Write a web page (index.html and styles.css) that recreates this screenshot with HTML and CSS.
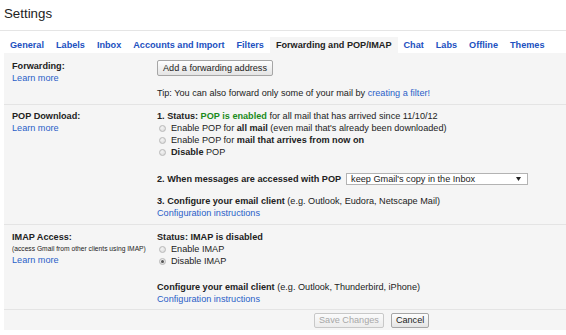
FILE: index.html
```html
<!DOCTYPE html>
<html>
<head>
<meta charset="utf-8">
<title>Settings</title>
<link rel="stylesheet" href="styles.css">
</head>
<body>
<div class="header"><h1 class="title">Settings</h1></div>
<nav class="tabs">
  <a class="tab">General</a>
  <a class="tab">Labels</a>
  <a class="tab">Inbox</a>
  <a class="tab">Accounts and Import</a>
  <a class="tab">Filters</a>
  <span class="tab active">Forwarding and POP/IMAP</span>
  <a class="tab">Chat</a>
  <a class="tab">Labs</a>
  <a class="tab">Offline</a>
  <a class="tab">Themes</a>
</nav>
<div class="panel">
  <section class="row row-fwd">
    <div class="label">
      <div class="label-title">Forwarding:</div>
      <a class="link">Learn more</a>
    </div>
    <div class="body">
      <div><button class="btn">Add a forwarding address</button></div>
      <div class="line tip">Tip: You can also forward only some of your mail by <a class="link">creating a filter!</a></div>
    </div>
  </section>
  <section class="row row-pop">
    <div class="label">
      <div class="label-title">POP Download:</div>
      <a class="link">Learn more</a>
    </div>
    <div class="body">
      <div class="line"><b>1. Status: </b><b class="green">POP is enabled</b> for all mail that has arrived since 11/10/12</div>
      <div class="line option"><span class="radio"></span><span>Enable POP for <b>all mail</b> (even mail that's already been downloaded)</span></div>
      <div class="line option"><span class="radio"></span><span>Enable POP for <b>mail that arrives from now on</b></span></div>
      <div class="line option"><span class="radio"></span><span><b>Disable</b> POP</span></div>
      <div class="when"><b>2. When messages are accessed with POP</b>
        <div class="select"><span>keep Gmail's copy in the Inbox</span><svg class="arrow" width="5" height="4" viewBox="0 0 5 4"><path d="M0 0H5L2.5 4Z" fill="#222"/></svg></div>
      </div>
      <div class="line block-gap"><b>3. Configure your email client</b> (e.g. Outlook, Eudora, Netscape Mail)</div>
      <div class="line"><a class="link">Configuration instructions</a></div>
    </div>
  </section>
  <section class="row row-imap">
    <div class="label">
      <div class="label-title">IMAP Access:</div>
      <div class="small">(access Gmail from other clients using IMAP)</div>
      <a class="link">Learn more</a>
    </div>
    <div class="body">
      <div class="line"><b>Status: IMAP is disabled</b></div>
      <div class="line option"><span class="radio"></span><span>Enable IMAP</span></div>
      <div class="line option"><span class="radio checked"></span><span>Disable IMAP</span></div>
      <div class="line block-gap2"><b>Configure your email client</b> (e.g. Outlook, Thunderbird, iPhone)</div>
      <div class="line"><a class="link">Configuration instructions</a></div>
    </div>
  </section>
  <div class="actions">
    <button class="btn small-btn" disabled>Save Changes</button>
    <button class="btn small-btn">Cancel</button>
  </div>
</div>
</body>
</html>
```
FILE: styles.css
```css
html, body {
  margin: 0;
  padding: 0;
  background: #fff;
}
body {
  font-family: "Liberation Sans", Arial, sans-serif;
  font-size: 9.15px;
  color: #222;
}
.header {
  height: 30px;
  border-bottom: 1px solid #e5e5e5;
}
.title {
  margin: 0;
  padding: 6px 0 0 4px;
  font-size: 13.3px;
  line-height: 16px;
  font-weight: normal;
  color: #222;
}
.tabs {
  display: flex;
  margin: 6px 0 0 4px;
  height: 16px;
}
.tab {
  padding: 0 6px;
  line-height: 16px;
  font-weight: bold;
  color: #2150c0;
  text-decoration: none;
  white-space: nowrap;
}
.tab.active {
  background: #f5f5f5;
  color: #222;
}
.panel {
  margin-left: 4px;
  background: #f5f5f5;
  padding-bottom: 2px;
}
.row {
  display: grid;
  grid-template-columns: 153px 1fr;
  border-bottom: 1px solid #e4e4e4;
}
.row-fwd { padding: 7px 0 5px; }
.row-pop { padding: 5px 0 5px; }
.row-imap { padding: 6px 0 4px; }
.label {
  padding-left: 8px;
  display: flex;
  flex-direction: column;
  align-items: flex-start;
  line-height: 12px;
}
.label-title {
  font-weight: bold;
}
.small {
  font-size: 6.7px;
  line-height: 11px;
  white-space: nowrap;
}
.link {
  color: #2a5fc8;
  text-decoration: none;
}
.body {
  line-height: 12px;
  white-space: nowrap;
}
.line {
  line-height: 12px;
}
.tip {
  margin-top: 11px;
}
.green {
  color: #1a8a1a;
}
.option {
  display: flex;
  align-items: center;
  gap: 5px;
  padding-left: 2px;
}
.radio {
  width: 7px;
  height: 7px;
  box-sizing: border-box;
  border-radius: 50%;
  border: 1px solid #b8b8b8;
  background: radial-gradient(circle at 40% 35%, #f4f4f4, #d6d6d6);
  display: flex;
  align-items: center;
  justify-content: center;
}
.radio.checked::after {
  content: "";
  width: 3px;
  height: 3px;
  border-radius: 50%;
  background: #555;
}
.when {
  margin-top: 14px;
  height: 14px;
  display: flex;
  align-items: center;
}
.select {
  margin-left: 5px;
  width: 182px;
  height: 12px;
  box-sizing: border-box;
  border: 1px solid #b3b3b3;
  background: #fff;
  display: flex;
  align-items: center;
  justify-content: space-between;
  padding: 0 6px 0 4px;
  line-height: 10px;
}
.arrow {
  display: block;
}
.block-gap {
  margin-top: 9px;
}
.block-gap2 {
  margin-top: 14px;
}
.btn {
  font-family: "Liberation Sans", Arial, sans-serif;
  font-size: 9.15px;
  color: #222;
  height: 16px;
  padding: 0 5px;
  border: 1px solid #a6a6a6;
  border-radius: 2px;
  background: linear-gradient(#fefefe, #e4e4e4);
  line-height: 14px;
  margin: 0;
}
.actions {
  padding: 3px 0 0 310px;
  display: flex;
  gap: 7px;
}
.small-btn {
  height: 15px;
  padding: 0 4px;
  line-height: 13px;
}
.small-btn:disabled {
  color: #a8a8a8;
  border-color: #c8c8c8;
  background: linear-gradient(#fbfbfb, #ececec);
}
```
